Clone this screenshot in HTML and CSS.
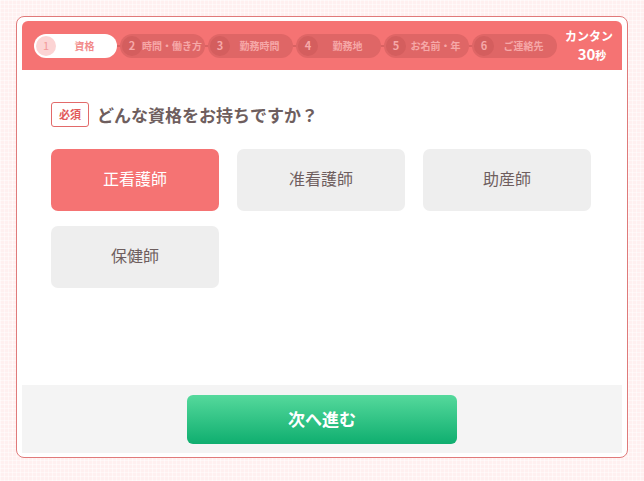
FILE: index.html
```html
<!DOCTYPE html>
<html lang="ja">
<head>
<meta charset="utf-8">
<link rel="stylesheet" href="styles.css">
</head>
<body>
<div class="card">
  <div class="header">
    <div class="steps">
      <div class="step active"><span class="num">1</span><span class="label">資格</span></div>
      <span class="line"></span>
      <div class="step"><span class="num">2</span><span class="label">時間・働き方</span></div>
      <span class="line"></span>
      <div class="step"><span class="num">3</span><span class="label">勤務時間</span></div>
      <span class="line"></span>
      <div class="step"><span class="num">4</span><span class="label">勤務地</span></div>
      <span class="line"></span>
      <div class="step"><span class="num">5</span><span class="label">お名前・年</span></div>
      <span class="line"></span>
      <div class="step"><span class="num">6</span><span class="label">ご連絡先</span></div>
    </div>
    <div class="easy"><div class="easy-top">カンタン</div><div class="easy-bottom">30<small>秒</small></div></div>
  </div>
  <div class="content">
    <div class="question"><span class="badge">必須</span><span class="qtext">どんな資格をお持ちですか？</span></div>
    <div class="options">
      <button class="opt selected">正看護師</button>
      <button class="opt">准看護師</button>
      <button class="opt">助産師</button>
      <button class="opt">保健師</button>
    </div>
  </div>
  <div class="footer">
    <button class="next">次へ進む</button>
  </div>
</div>
</body>
</html>
```
FILE: styles.css
```css
* { box-sizing: border-box; }
html, body { margin: 0; padding: 0; }
body {
  width: 644px;
  height: 481px;
  overflow: hidden;
  font-family: "Noto Sans CJK JP", "Noto Sans", sans-serif;
  background-color: #fff0f0;
  background-image:
    linear-gradient(rgba(255,255,255,0.45) 1px, transparent 1px),
    linear-gradient(90deg, rgba(255,255,255,0.45) 1px, transparent 1px);
  background-size: 4px 4px;
  padding: 16px;
}
.card {
  width: 612px;
  height: 442px;
  background: #fff;
  border: 1px solid #e07a7a;
  border-radius: 8px;
  padding: 4px 5px;
  display: flex;
  flex-direction: column;
}
.header {
  height: 49px;
  background: #f57373;
  border-radius: 6px 6px 0 0;
  display: flex;
  align-items: center;
  padding-left: 12px;
}
.steps {
  display: flex;
  align-items: center;
}
.line {
  width: 3px;
  height: 2px;
  background: #d96262;
}
.step {
  width: 85px;
  height: 24px;
  border-radius: 12px;
  background: #df6666;
  display: flex;
  align-items: center;
  padding-left: 2px;
  font-size: 10px;
  font-weight: bold;
  color: #f6a8a8;
  white-space: nowrap;
  line-height: 1;
}
.step .num {
  width: 20px;
  height: 20px;
  border-radius: 50%;
  background: #d45e5e;
  display: flex;
  align-items: center;
  justify-content: center;
  font-size: 11px;
  flex: none;
}
.step .label {
  flex: 1;
  text-align: center;
  padding-right: 4px;
}
.step.active {
  width: 83px;
  background: #fff;
  color: #f28a8a;
}
.step.active .num {
  background: #fcd4d4;
  color: #f29a9a;
  font-weight: normal;
}
.easy {
  margin-left: 6px;
  width: 52px;
  color: #fff;
  font-weight: bold;
  text-align: center;
  line-height: normal;
}
.easy-top { font-size: 12px; }
.easy-bottom { font-size: 15px; padding-left: 6px; margin-top: -1px; }
.easy-bottom small { font-size: 11px; }
.content {
  flex: 1;
  padding: 32px 0 0 29px;
}
.question {
  display: flex;
  align-items: center;
  gap: 8px;
}
.badge {
  width: 38px;
  height: 25px;
  border: 1px solid #e26a6a;
  border-radius: 3px;
  color: #e25a5a;
  font-size: 11px;
  font-weight: bold;
  display: flex;
  align-items: center;
  justify-content: center;
  line-height: 1;
}
.qtext {
  font-size: 17px;
  font-weight: bold;
  color: #6e5e5e;
  line-height: 1;
}
.options {
  margin-top: 22px;
  display: grid;
  grid-template-columns: repeat(3, 168px);
  column-gap: 18px;
  row-gap: 15px;
}
.opt {
  height: 62px;
  border: none;
  border-radius: 7px;
  background: #eeeeee;
  color: #6e5e5e;
  font-family: inherit;
  font-size: 16px;
  line-height: 1;
  padding: 0 0 4px;
}
.opt.selected {
  background: #f57373;
  color: #fff;
}
.footer {
  height: 68px;
  background: #f4f4f4;
  display: flex;
  justify-content: center;
  padding-top: 10px;
}
.next {
  width: 270px;
  height: 49px;
  border: none;
  border-radius: 6px;
  background: linear-gradient(#55d99c, #0fae6f);
  color: #fff;
  font-family: inherit;
  font-size: 17px;
  font-weight: bold;
  line-height: 1;
  padding: 0 0 3px;
}
```
